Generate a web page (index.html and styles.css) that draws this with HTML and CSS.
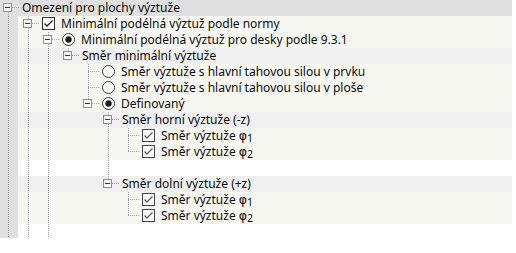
FILE: index.html
```html
<!DOCTYPE html>
<html lang="cs">
<head>
  <meta charset="UTF-8">
  <title>Omezení pro plochy výztuže</title>
  <link rel="stylesheet" href="styles.css">
</head>
<body>
  <div class="tree">
    <!-- úroveň 0 -->
    <div class="row hd">
      <span class="s root"><span class="x"></span></span>
      <span class="lbl tx">Omezení pro plochy výztuže</span>
    </div>

    <div class="row it">
      <span class="g ln"></span>
      <span class="s tee"><span class="x"></span></span>
      <svg class="ic" viewBox="0 0 13 13"><rect x="0.5" y="0.5" width="12" height="12" fill="#fff" stroke="#333"/><polyline points="2.5,6.5 5,9 10.5,3.5" fill="none" stroke="#222" stroke-width="1.3"/></svg>
      <span class="lbl">Minimální podélná výztuž podle normy</span>
    </div>

    <div class="row it">
      <span class="g ln"></span><span class="g ln"></span>
      <span class="s tee"><span class="x"></span></span>
      <svg class="ic" viewBox="0 0 13 13"><circle cx="6.5" cy="6.5" r="6" fill="#fff" stroke="#333"/><circle cx="6.5" cy="6.5" r="3.2" fill="#1a1a1a"/></svg>
      <span class="lbl">Minimální podélná výztuž pro desky podle 9.3.1</span>
    </div>

    <div class="row sec">
      <span class="g ln"></span><span class="g ln"></span><span class="g ln"></span>
      <span class="s elbow"><span class="x"></span></span>
      <span class="lbl tx">Směr minimální výztuže</span>
    </div>

    <div class="row it">
      <span class="g ln"></span><span class="g ln"></span><span class="g ln"></span><span class="g"></span>
      <span class="s tee"></span>
      <svg class="ic" viewBox="0 0 13 13"><circle cx="6.5" cy="6.5" r="6" fill="#fff" stroke="#333"/></svg>
      <span class="lbl">Směr výztuže s hlavní tahovou silou v prvku</span>
    </div>

    <div class="row it">
      <span class="g ln"></span><span class="g ln"></span><span class="g ln"></span><span class="g"></span>
      <span class="s tee"></span>
      <svg class="ic" viewBox="0 0 13 13"><circle cx="6.5" cy="6.5" r="6" fill="#fff" stroke="#333"/></svg>
      <span class="lbl">Směr výztuže s hlavní tahovou silou v ploše</span>
    </div>

    <div class="row it">
      <span class="g ln"></span><span class="g ln"></span><span class="g ln"></span><span class="g"></span>
      <span class="s elbow"><span class="x"></span></span>
      <svg class="ic" viewBox="0 0 13 13"><circle cx="6.5" cy="6.5" r="6" fill="#fff" stroke="#333"/><circle cx="6.5" cy="6.5" r="3.2" fill="#1a1a1a"/></svg>
      <span class="lbl">Definovaný</span>
    </div>

    <!-- horní výztuž -->
    <div class="row sec">
      <span class="g ln"></span><span class="g ln"></span><span class="g ln"></span><span class="g"></span><span class="g"></span>
      <span class="s tee"><span class="x"></span></span>
      <span class="lbl tx">Směr horní výztuže (-z)</span>
    </div>

    <div class="row it">
      <span class="g ln"></span><span class="g ln"></span><span class="g ln"></span><span class="g"></span><span class="g"></span><span class="g ln"></span>
      <span class="s tee"></span>
      <svg class="ic" viewBox="0 0 13 13"><rect x="0.5" y="0.5" width="12" height="12" fill="#fff" stroke="#444"/><polyline points="2.5,6.5 5,9 10.5,3.5" fill="none" stroke="#555" stroke-width="1.2"/></svg>
      <span class="lbl">Směr výztuže <span class="phi">φ</span><span class="sub">1</span></span>
    </div>

    <div class="row it">
      <span class="g ln"></span><span class="g ln"></span><span class="g ln"></span><span class="g"></span><span class="g"></span><span class="g ln"></span>
      <span class="s elbow"></span>
      <svg class="ic" viewBox="0 0 13 13"><rect x="0.5" y="0.5" width="12" height="12" fill="#fff" stroke="#444"/><polyline points="2.5,6.5 5,9 10.5,3.5" fill="none" stroke="#555" stroke-width="1.2"/></svg>
      <span class="lbl">Směr výztuže <span class="phi">φ</span><span class="sub">2</span></span>
    </div>

    <div class="row blank">
      <span class="g ln"></span><span class="g ln"></span><span class="g ln"></span><span class="g"></span><span class="g"></span><span class="g ln"></span>
    </div>

    <!-- dolní výztuž -->
    <div class="row sec">
      <span class="g ln"></span><span class="g ln"></span><span class="g ln"></span><span class="g"></span><span class="g"></span>
      <span class="s elbow"><span class="x"></span></span>
      <span class="lbl tx">Směr dolní výztuže (+z)</span>
    </div>

    <div class="row it">
      <span class="g ln"></span><span class="g ln"></span><span class="g ln"></span><span class="g"></span><span class="g"></span><span class="g"></span>
      <span class="s tee"></span>
      <svg class="ic" viewBox="0 0 13 13"><rect x="0.5" y="0.5" width="12" height="12" fill="#fff" stroke="#444"/><polyline points="2.5,6.5 5,9 10.5,3.5" fill="none" stroke="#555" stroke-width="1.2"/></svg>
      <span class="lbl">Směr výztuže <span class="phi">φ</span><span class="sub">1</span></span>
    </div>

    <div class="row it">
      <span class="g ln"></span><span class="g ln"></span><span class="g ln"></span><span class="g"></span><span class="g"></span><span class="g"></span>
      <span class="s elbow"></span>
      <svg class="ic" viewBox="0 0 13 13"><rect x="0.5" y="0.5" width="12" height="12" fill="#fff" stroke="#444"/><polyline points="2.5,6.5 5,9 10.5,3.5" fill="none" stroke="#555" stroke-width="1.2"/></svg>
      <span class="lbl">Směr výztuže <span class="phi">φ</span><span class="sub">2</span></span>
    </div>

    <div class="row blank tail">
      <span class="g ln"></span><span class="g ln"></span><span class="g ln"></span>
    </div>
  </div>
</body>
</html>
```

FILE: styles.css
```css
:root {
  --strip: #e0e0e0;
  --head: #e0e0e0;
  --sec: #f0f0f0;
  --cream: #f8f8f3;
  --dot: #a3a3a3;
  --text: #0a0a0a;
}

* {
  margin: 0;
  padding: 0;
  box-sizing: border-box;
}

body {
  background: #fff;
  font-family: "Noto Sans", "Open Sans", sans-serif;
  font-size: 12px;
  color: var(--text);
}

.tree {
  width: 512px;
}

.row {
  display: flex;
  align-items: flex-start;
  height: 16px;
  line-height: 16px;
  white-space: nowrap;
}

.hd {
  background: var(--head);
}

.it {
  background: linear-gradient(to right, var(--strip) 18px, var(--cream) 18px);
}

.sec {
  background: linear-gradient(to right, var(--strip) 18px, var(--sec) 18px);
}

.blank {
  background: linear-gradient(to right, var(--strip) 18px, #fff 18px);
}

.tail {
  height: 14px;
}

/* vodicí čáry stromu */
.g {
  flex: none;
  width: 20px;
  height: 100%;
}

.g.ln {
  background: repeating-linear-gradient(to bottom, var(--dot) 0 1px, transparent 1px 2px) 8px 0 / 1px 100% no-repeat;
}

.s {
  flex: none;
  width: 20px;
  height: 16px;
}

.s.tee {
  background:
    repeating-linear-gradient(to bottom, var(--dot) 0 1px, transparent 1px 2px) 8px 0 / 1px 16px no-repeat,
    repeating-linear-gradient(to right, var(--dot) 0 1px, transparent 1px 2px) 8px 7px / 12px 1px no-repeat;
}

.s.elbow {
  background:
    repeating-linear-gradient(to bottom, var(--dot) 0 1px, transparent 1px 2px) 8px 0 / 1px 8px no-repeat,
    repeating-linear-gradient(to right, var(--dot) 0 1px, transparent 1px 2px) 8px 7px / 12px 1px no-repeat;
}

.s.root {
  background:
    repeating-linear-gradient(to bottom, var(--dot) 0 1px, transparent 1px 2px) 8px 8px / 1px 8px no-repeat,
    repeating-linear-gradient(to right, var(--dot) 0 1px, transparent 1px 2px) 8px 7px / 12px 1px no-repeat;
}

/* tlačítko sbalení */
.x {
  display: flex;
  align-items: center;
  justify-content: center;
  width: 9px;
  height: 9px;
  margin: 3px 0 0 3px;
  border: 1px solid #909090;
  background: #fff;
}

.x::before {
  content: "";
  width: 5px;
  height: 1px;
  background: #333;
}

.ic {
  flex: none;
  display: block;
  width: 13px;
  height: 13px;
  margin: 1px 0 0 2px;
}

.lbl {
  margin-left: 6px;
}

.lbl.tx {
  margin-left: 2px;
}

.phi {
  font-family: "DejaVu Sans", sans-serif;
  font-size: 12.5px;
}

.sub {
  font-size: 10.5px;
  vertical-align: -2px;
  line-height: 1;
}
```
